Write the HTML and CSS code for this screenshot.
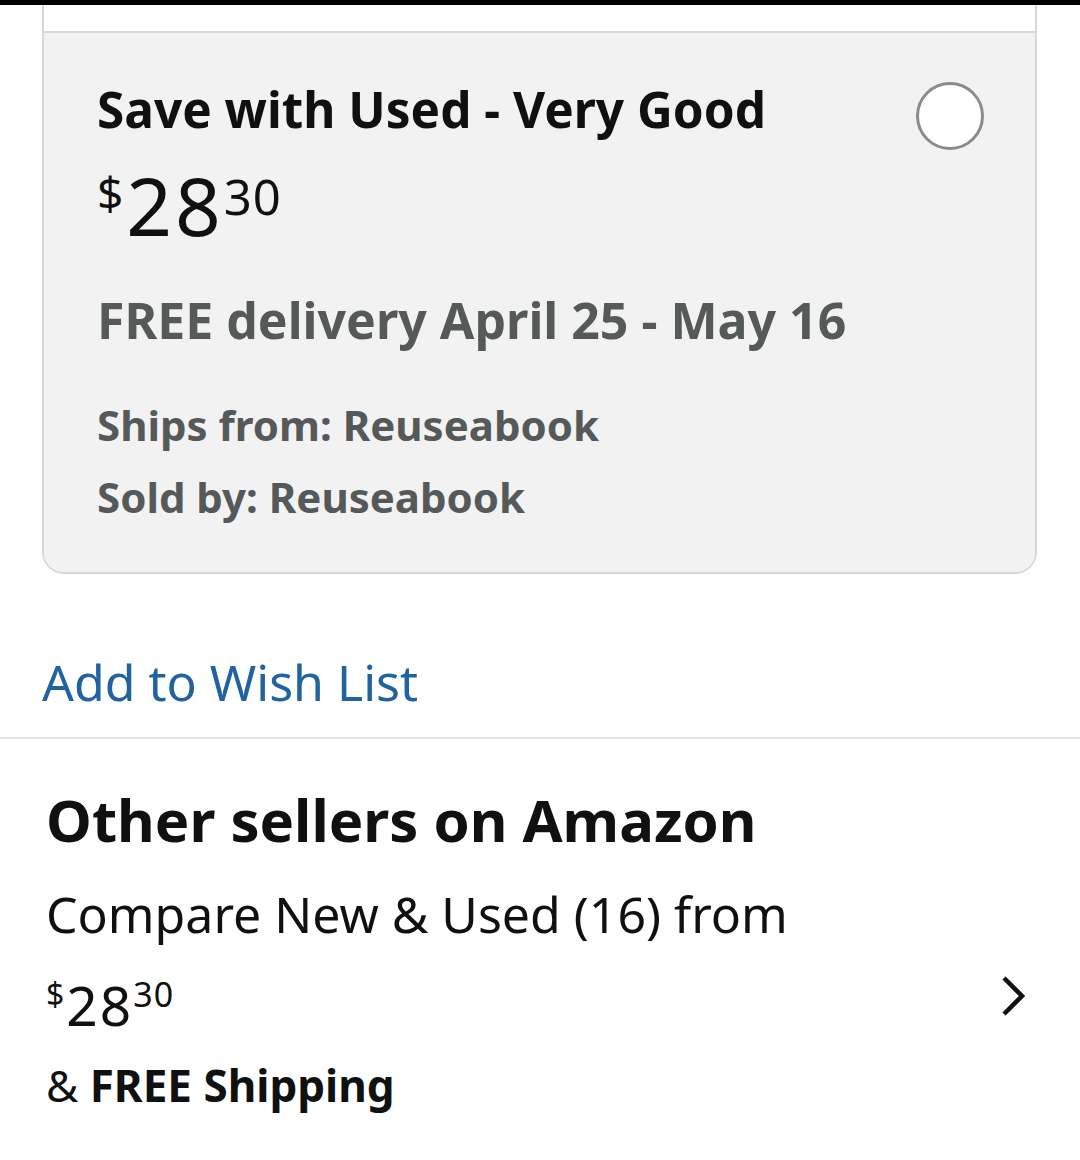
FILE: index.html
```html
<!DOCTYPE html>
<html lang="en">
<head>
  <meta charset="UTF-8">
  <meta name="viewport" content="width=device-width, initial-scale=1.0">
  <title>Buying options</title>
  <link rel="stylesheet" href="styles.css">
</head>
<body>
  <div class="topbar"></div>
  <div class="page">
    <div class="options">
      <div class="option option-new"></div>
      <div class="option option-used">
        <div class="option-head">
          <h3 class="option-title">Save with Used - Very Good</h3>
          <span class="radio"></span>
        </div>
        <div class="price price-lg"><span class="sym">$</span><span class="whole">28</span><span class="frac">30</span></div>
        <p class="delivery">FREE delivery April 25 - May 16</p>
        <p class="seller">Ships from: Reuseabook</p>
        <p class="seller">Sold by: Reuseabook</p>
      </div>
    </div>
    <a class="wishlist" href="#">Add to Wish List</a>
  </div>

  <div class="others">
    <h2 class="others-title">Other sellers on Amazon</h2>
    <div class="others-row">
      <div class="others-text">
        <p class="compare">Compare New &amp; Used (16) from</p>
        <div class="price price-sm"><span class="sym">$</span><span class="whole">28</span><span class="frac">30</span></div>
        <p class="shipping">&amp; <b>FREE Shipping</b></p>
      </div>
      <svg class="chevron" width="30" height="44" viewBox="0 0 30 44">
        <path d="M6 4 L24 22 L6 40" fill="none" stroke="#111" stroke-width="4.5"/>
      </svg>
    </div>
  </div>
</body>
</html>
```

FILE: styles.css
```css
* { margin: 0; padding: 0; box-sizing: border-box; }
body { font-family: "Noto Sans", "Open Sans", sans-serif; color: #0f1111; background: #fff; width: 1080px; }
.topbar { height: 5px; background: #000; }

.page { padding: 0 43px 0 42px; }
.options { border: 2px solid #d5d9d9; border-top: none; border-radius: 0 0 22px 22px; overflow: hidden; }
.option-new { height: 28px; background: #fff; border-bottom: 2px solid #d5d9d9; }
.option-used { background: #f2f2f2; padding: 44px 52px 39px 53px; }
.option-head { display: flex; justify-content: space-between; align-items: flex-start; height: 64px; }
.option-title { font-size: 49.5px; font-weight: 700; line-height: 64px; }
.radio { width: 68px; height: 68px; border: 3px solid #888c8c; border-radius: 50%; background: #fff; margin-top: 5px; margin-right: -1px; flex-shrink: 0; }

.price { display: flex; align-items: flex-start; line-height: 1; }
.price-lg { margin-top: 24px; height: 78px; }
.price-lg .sym { font-size: 46px; margin-top: 4px; margin-right: 3px; }
.price-lg .whole { font-size: 80px; letter-spacing: 3px; }
.price-lg .frac { font-size: 49px; margin-top: 7px; letter-spacing: 1px; }

.delivery { color: #565959; font-weight: 700; font-size: 50px; line-height: 64px; margin-top: 45px; }
.seller { color: #565959; font-weight: 700; font-size: 42px; line-height: 72px; }
.delivery + .seller { margin-top: 37px; }

.wishlist { display: block; color: #2162a1; text-decoration: none; font-size: 50px; line-height: 64px; margin-top: 76px; }

.others { border-top: 2px solid #e3e6e6; margin-top: 23px; padding: 41px 48px 0 46px; }
.others-title { font-size: 58px; font-weight: 700; line-height: 80px; }
.others-row { display: flex; justify-content: space-between; align-items: flex-start; }
.compare { font-size: 50px; line-height: 64px; margin-top: 22px; }
.price-sm { margin-top: 31px; height: 56px; }
.price-sm .sym { font-size: 32px; margin-top: 1px; margin-right: 2px; }
.price-sm .whole { font-size: 55px; letter-spacing: 2px; }
.price-sm .frac { font-size: 34px; letter-spacing: 1px; }
.shipping { font-size: 44px; line-height: 64px; margin-top: 20px; }
.shipping b { font-weight: 700; }
.chevron { margin-top: 114px; margin-right: 4px; }
```
